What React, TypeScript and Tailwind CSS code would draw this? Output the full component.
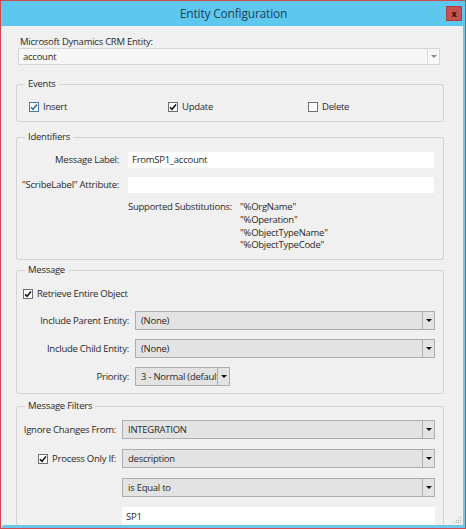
import type { ReactNode } from 'react';

function Check({ checked, hover }: { checked?: boolean; hover?: boolean }) {
  return (
    <span
      className={`flex h-[10px] w-[10px] shrink-0 items-center justify-center border bg-white ${
        hover ? 'border-[#3d7bad]' : 'border-[#6f6f6f]'
      }`}
    >
      {checked && (
        <svg width="8" height="8" viewBox="0 0 8 8">
          <path
            d="M1 4.2 L3 6.3 L7 1.5"
            fill="none"
            stroke={hover ? '#2f6a9c' : '#111'}
            strokeWidth="1.5"
          />
        </svg>
      )}
    </span>
  );
}

function CheckLabel({ label, checked, hover }: { label: string; checked?: boolean; hover?: boolean }) {
  return (
    <div className="flex items-center gap-[4px]">
      <Check checked={checked} hover={hover} />
      <span>{label}</span>
    </div>
  );
}

function Arrow({ color = '#111' }: { color?: string }) {
  return (
    <svg width="6" height="3" viewBox="0 0 6 3">
      <path d="M0 0 H6 L3 3 Z" fill={color} />
    </svg>
  );
}

// gray read-only style dropdown
function Select({ value, className = '' }: { value: string; className?: string }) {
  return (
    <div className={`flex h-[19px] border border-[#adadad] bg-[#e3e3e3] ${className}`}>
      <div className="flex-1 overflow-hidden whitespace-nowrap pl-[5px] leading-[17px]">{value}</div>
      <div className="flex w-[12px] items-center justify-center border-l border-[#adadad]">
        <Arrow />
      </div>
    </div>
  );
}

function TextBox({ value = '' }: { value?: string }) {
  return <div className="h-[16px] bg-white pl-[4px] leading-[16px]">{value}</div>;
}

function Group({ title, children, className = '' }: { title: string; children: ReactNode; className?: string }) {
  return (
    <fieldset className={`rounded-[2px] border border-[#d3d3d3] ${className}`}>
      <legend className="ml-[8px] px-[3px] leading-[12px]">{title}</legend>
      {children}
    </fieldset>
  );
}

export default function App() {
  return (
    <div className="flex h-[529px] w-[466px] flex-col overflow-hidden border border-[#cf4a4f] font-['Open_Sans',sans-serif] text-[9.5px] tracking-[-0.25px] text-[#2a2a2a]">
      {/* Title bar */}
      <div className="flex h-[25px] shrink-0 items-center bg-[#5ec7ee]">
        <div className="w-[20px]" />
        <div className="flex-1 text-center text-[12px] font-medium tracking-[-0.2px] text-[#1d4458]">Entity Configuration</div>
        <div className="mr-[3px] flex h-[15px] w-[16px] items-center justify-center border border-[#a84040] bg-[#c75050] text-[9px] font-bold leading-none text-[#2b1010]">
          x
        </div>
      </div>

      {/* Body */}
      <div className="relative flex flex-1 flex-col overflow-hidden border-b-[3px] border-l-2 border-r-2 border-b-[#6cc6ea] border-l-[#e2f1f8] border-r-[#6cc6ea] bg-[#f0f0f0] pl-[13px] pr-[19px] pt-[10px]">
        <div className="pl-[4px] leading-[12px]">Microsoft Dynamics CRM Entity:</div>
        <div className="ml-[2px] mr-[4px] flex h-[17px] border border-[#d6d6d6] bg-[#f7f7f7]">
          <div className="flex-1 pl-[4px] leading-[15px]">account</div>
          <div className="flex w-[12px] items-center justify-center border-l border-[#dcdcdc]">
            <Arrow color="#8a8a8a" />
          </div>
        </div>

        <Group title="Events" className="mt-[13px]">
          <div className="grid grid-cols-[139px_140px_1fr] pb-[8px] pl-[12px] pt-[11px] leading-[12px]">
            <CheckLabel label="Insert" checked hover />
            <CheckLabel label="Update" checked />
            <CheckLabel label="Delete" />
          </div>
        </Group>

        <Group title="Identifiers" className="mt-[9px]">
          <div className="grid grid-cols-[102px_1fr] items-center gap-x-[9px] gap-y-[9px] pr-[9px] pt-[9px]">
            <div className="text-right">Message Label:</div>
            <TextBox value="FromSP1_account" />
            <div className="text-right">"ScribeLabel" Attribute:</div>
            <TextBox />
          </div>
          <div className="flex pb-[7px] pl-[111px] pt-[8px] leading-[12.8px]">
            <div className="w-[112px]">Supported Substitutions:</div>
            <div className="flex flex-col">
              <span>"%OrgName"</span>
              <span>"%Operation"</span>
              <span>"%ObjectTypeName"</span>
              <span>"%ObjectTypeCode"</span>
            </div>
          </div>
        </Group>

        <Group title="Message" className="mt-[4px]">
          <div className="pl-[6px] pt-[12px] leading-[12px]">
            <CheckLabel label="Retrieve Entire Object" checked />
          </div>
          <div className="grid grid-cols-[112px_1fr] items-center gap-x-[6px] gap-y-[9px] pb-[7px] pr-[8px] pt-[11px]">
            <div className="text-right">Include Parent Entity:</div>
            <Select value="(None)" />
            <div className="text-right">Include Child Entity:</div>
            <Select value="(None)" />
            <div className="text-right">Priority:</div>
            <Select value="3 - Normal (default)" className="w-[95px]" />
          </div>
        </Group>

        <Group title="Message Filters" className="mt-[6px]">
          <div className="grid grid-cols-[99px_1fr] items-center gap-x-[6px] gap-y-[10px] pr-[8px] pt-[8px]">
            <div className="text-right">Ignore Changes From:</div>
            <Select value="INTEGRATION" />
            <div className="flex items-center justify-end gap-[4px]">
              <Check checked />
              <span>Process Only If:</span>
            </div>
            <Select value="description" />
            <div />
            <Select value="is Equal to" />
            <div />
            <div className="h-[20px] bg-white pl-[4px] leading-[20px]">SP1</div>
          </div>
        </Group>

        {/* resize grip */}
        <svg className="absolute bottom-[1px] right-[1px]" width="8" height="8" viewBox="0 0 8 8">
          <g fill="#b8b8b8">
            <rect x="6" y="0" width="1" height="1" />
            <rect x="4" y="2" width="1" height="1" />
            <rect x="6" y="2" width="1" height="1" />
            <rect x="2" y="4" width="1" height="1" />
            <rect x="4" y="4" width="1" height="1" />
            <rect x="6" y="4" width="1" height="1" />
            <rect x="0" y="6" width="1" height="1" />
            <rect x="2" y="6" width="1" height="1" />
            <rect x="4" y="6" width="1" height="1" />
            <rect x="6" y="6" width="1" height="1" />
          </g>
        </svg>
      </div>
    </div>
  );
}
